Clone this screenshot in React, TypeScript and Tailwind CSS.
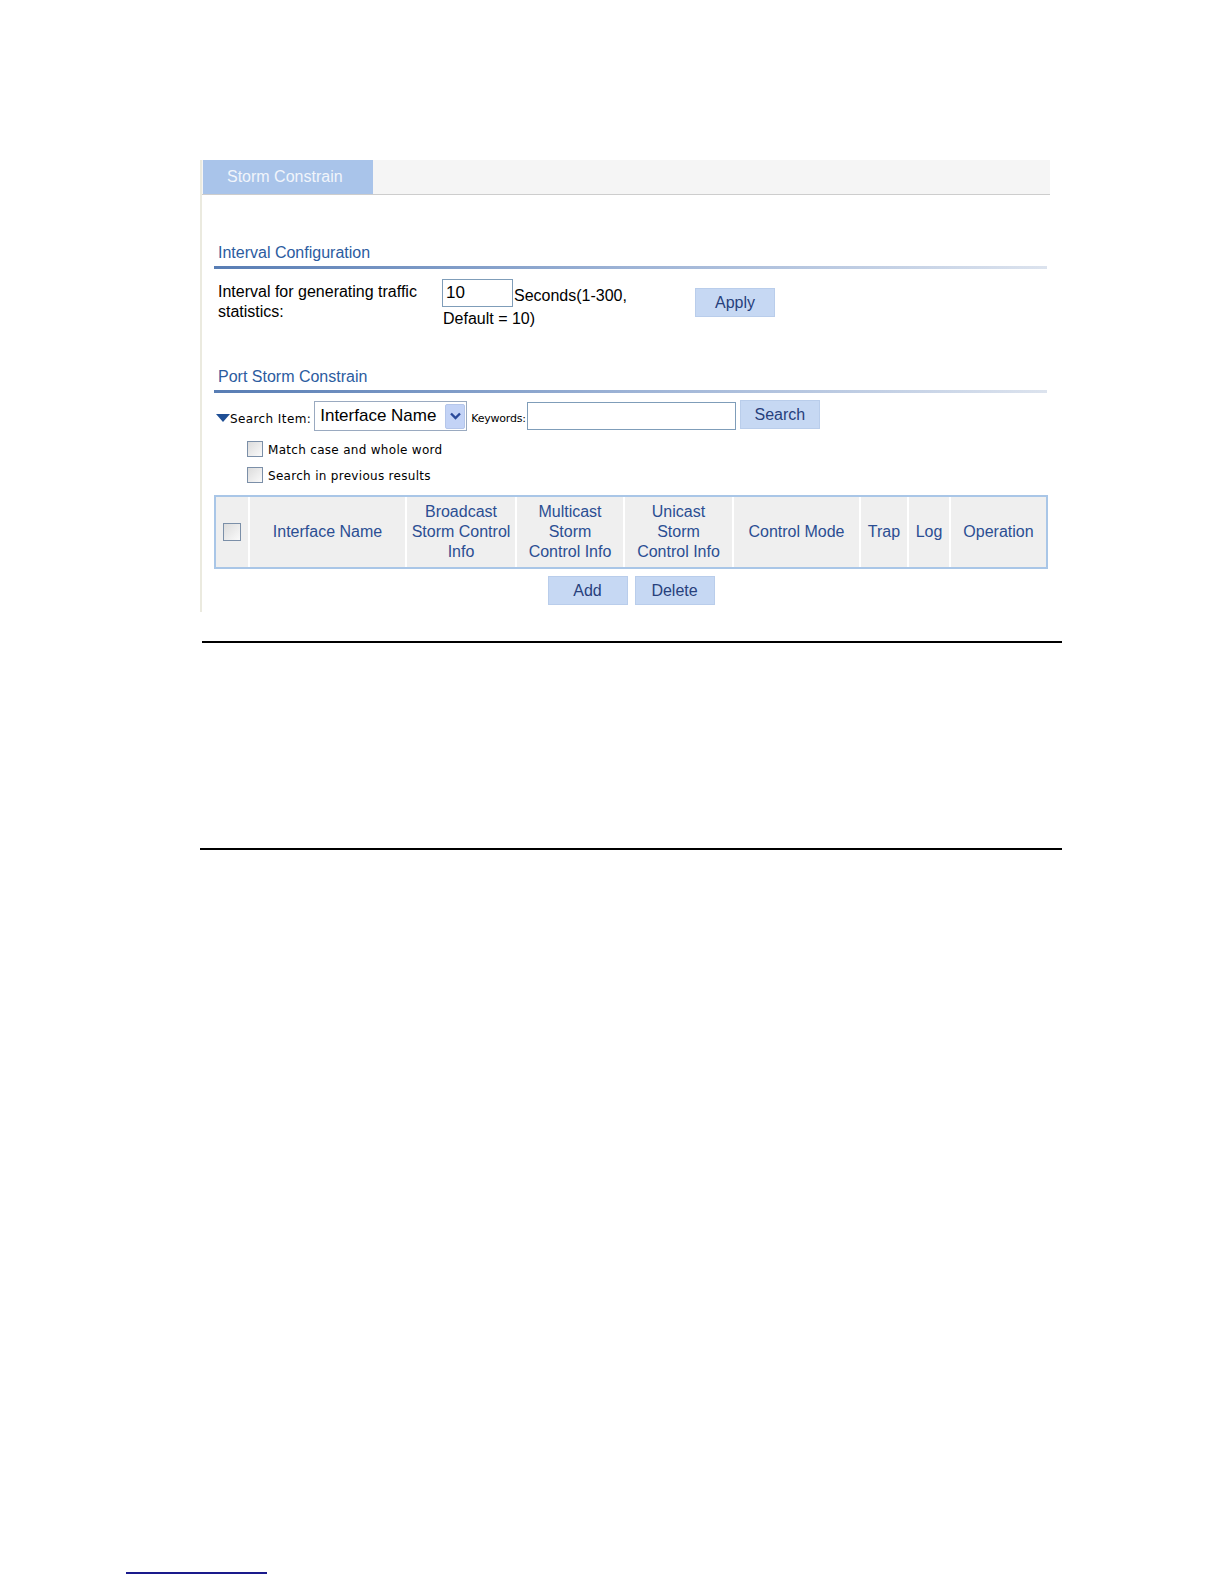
import React from 'react';

const btn =
  'h-[29px] w-[80px] bg-[#c6d8f3] border border-[#b9cdeb] text-[16px] text-[#27407c] flex items-center justify-center';

function Check({ size = 16 }: { size?: number }) {
  return (
    <span
      className="inline-block border border-[#7b8fa8] bg-gradient-to-br from-[#dcdcdc] to-[#fafafa]"
      style={{ width: size, height: size }}
    />
  );
}

function SectionTitle({ text, top }: { text: string; top: string }) {
  return (
    <div className={top}>
      <div className="pl-[4px] text-[16px] leading-[20px] text-[#2c5c9f]">{text}</div>
      <div className="mt-[3px] h-[3px] w-[833px] bg-gradient-to-r from-[#587db4] via-[#9db3d6] to-[#dce3ee]" />
    </div>
  );
}

const cols = [
  { w: 'w-[34px]', label: null },
  { w: 'w-[157px]', label: ['Interface Name'] },
  { w: 'w-[110px]', label: ['Broadcast', 'Storm Control', 'Info'] },
  { w: 'w-[108px]', label: ['Multicast', 'Storm', 'Control Info'] },
  { w: 'w-[109px]', label: ['Unicast', 'Storm', 'Control Info'] },
  { w: 'w-[127px]', label: ['Control Mode'] },
  { w: 'w-[48px]', label: ['Trap'] },
  { w: 'w-[42px]', label: ['Log'] },
  { w: 'flex-1', label: ['Operation'] },
];

export default function App() {
  return (
    <div className="w-full overflow-hidden bg-white font-['Liberation_Sans',Arial,sans-serif] text-black">
      <div className="pl-[200px] pt-[160px]">
        {/* screenshot panel */}
        <div className="h-[452px] w-[850px] border-l-2 border-[#ebeadf]">
          <div className="flex h-[35px] border-b border-[#cdcdcd] bg-[#f5f5f5]">
            <div className="ml-[1px] flex w-[170px] items-center bg-[#a9c4ea] pl-[24px] text-[16px] text-[#f1f5fb]">
              Storm Constrain
            </div>
          </div>

          <div className="pl-[12px]">
            <SectionTitle text="Interval Configuration" top="mt-[48px]" />

            <div className="mt-[10px] flex">
              <div className="w-[228px] pl-[4px] pt-[3px] text-[16px] leading-[20px]">
                Interval for generating traffic
                <br />
                statistics:
              </div>
              <div className="w-[253px] text-[16px]">
                <div className="flex h-[28px] items-center">
                  <div className="flex h-[28px] w-[71px] items-center border border-[#7f9db9] bg-white pl-[3px] text-[17px]">
                    10
                  </div>
                  <span className="mt-[6px] pl-[1px]">Seconds(1-300,</span>
                </div>
                <div className="mt-[2px] pl-[1px] leading-[20px]">Default = 10)</div>
              </div>
              <div className={`${btn} mt-[9px]`}>Apply</div>
            </div>

            <SectionTitle text="Port Storm Constrain" top="mt-[38px]" />

            <div className="mt-[8px] flex h-[30px] items-center">
              <svg width="14" height="9" viewBox="0 0 14 9" className="ml-[2px] mt-[5px]">
                <polygon points="0,0 14,0 7,8" fill="#1f4f95" />
              </svg>
              <span className="mt-[6px] font-['DejaVu_Sans',Verdana,sans-serif] text-[12px] leading-[16px] tracking-[0.4px]">
                Search Item:
              </span>
              <div className="ml-[3px] flex h-[30px] w-[153px] items-center justify-between border border-[#9aaac0] bg-white pl-[5px] pr-[1px] text-[17px]">
                <span>Interface Name</span>
                <span className="flex h-[25px] w-[20px] items-center justify-center rounded-[2px] border border-[#b5c6ea] bg-[#c3d3f6]">
                  <svg width="11" height="8" viewBox="0 0 11 8">
                    <polyline points="1,1.5 5.5,6 10,1.5" fill="none" stroke="#2b4a9a" strokeWidth="2.4" />
                  </svg>
                </span>
              </div>
              <span className="ml-[4px] mt-[6px] font-['DejaVu_Sans',Verdana,sans-serif] text-[11px] leading-[16px] tracking-[-0.2px]">
                Keywords:
              </span>
              <div className="ml-[1px] h-[28px] w-[209px] border border-[#7f9db9] bg-white" />
              <div className={`${btn} -mt-[3px] ml-[4px] h-[28px]`}>Search</div>
            </div>

            <div className="mt-[10px] flex h-[16px] items-center pl-[33px]">
              <Check />
              <span className="ml-[5px] mt-[2px] font-['DejaVu_Sans',Verdana,sans-serif] text-[12px] leading-[16px] tracking-[0.3px]">
                Match case and whole word
              </span>
            </div>
            <div className="mt-[10px] flex h-[16px] items-center pl-[33px]">
              <Check />
              <span className="ml-[5px] mt-[2px] font-['DejaVu_Sans',Verdana,sans-serif] text-[12px] leading-[16px] tracking-[0.3px]">
                Search in previous results
              </span>
            </div>

            {/* table */}
            <div className="mt-[12px] flex h-[74px] w-[834px] border-2 border-[#a9c6e7] bg-[#efefef]">
              {cols.map((c, i) => (
                <div
                  key={i}
                  className={`${c.w} flex items-center justify-center ${i < cols.length - 1 ? 'border-r-2 border-white' : ''}`}
                >
                  {c.label ? (
                    <div className="text-center text-[16px] leading-[20px] text-[#2b4e93]">
                      {c.label.map((l) => (
                        <div key={l}>{l}</div>
                      ))}
                    </div>
                  ) : (
                    <Check size={18} />
                  )}
                </div>
              ))}
            </div>

            <div className="mt-[7px] flex w-[834px] justify-center gap-[7px]">
              <div className={btn}>Add</div>
              <div className={btn}>Delete</div>
            </div>
          </div>
        </div>
      </div>

      <div className="ml-[202px] mt-[29px] h-[2px] w-[860px] bg-black" />
      <div className="ml-[200px] mt-[205px] h-[2px] w-[862px] bg-black" />

      <div className="ml-[126px] mt-[722px] h-[2px] w-[141px] bg-[#1a1a8c]" />
    </div>
  );
}
